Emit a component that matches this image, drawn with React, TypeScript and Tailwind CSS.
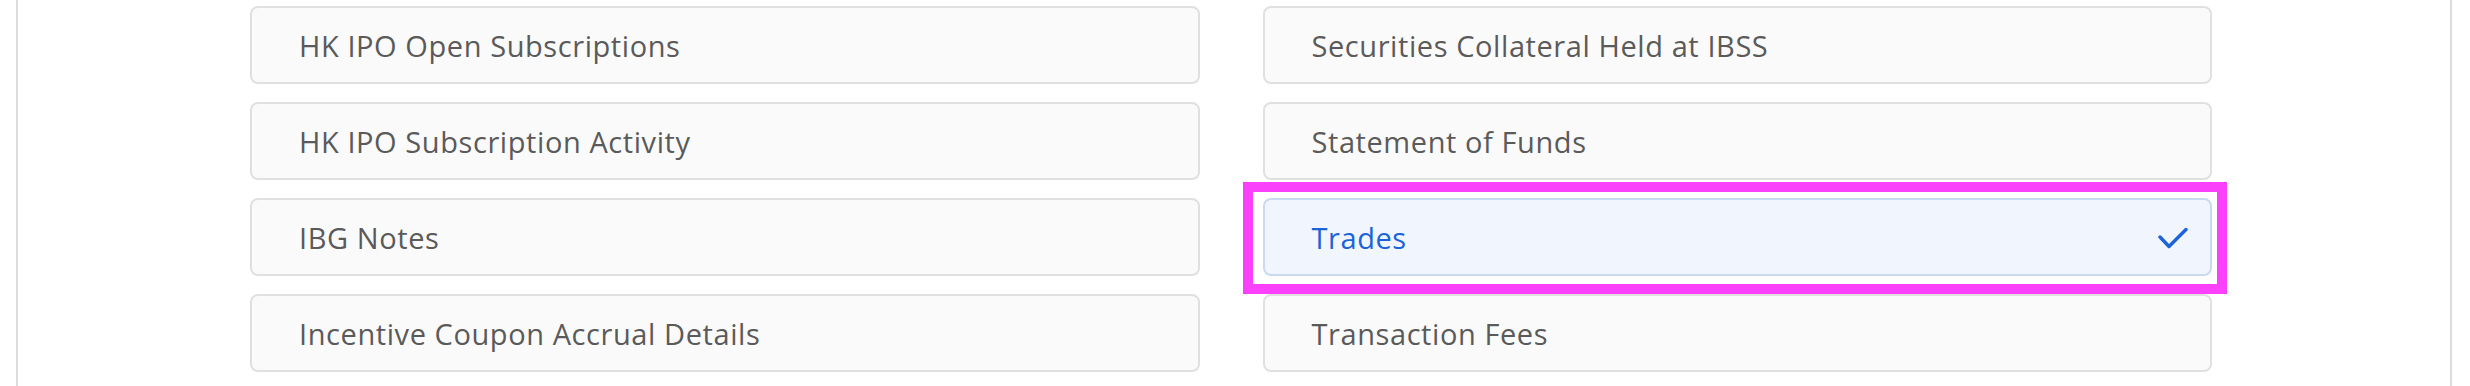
import React from "react";

const left = [
  "HK IPO Open Subscriptions",
  "HK IPO Subscription Activity",
  "IBG Notes",
  "Incentive Coupon Accrual Details",
];
const right = [
  "Securities Collateral Held at IBSS",
  "Statement of Funds",
  "Trades",
  "Transaction Fees",
];

function Card({ label, selected }: { label: string; selected?: boolean }) {
  if (selected) {
    return (
      <div className="relative">
        <div className="absolute -left-[20px] -top-[16px] -right-[15px] -bottom-[18px] border-[10px] border-[#fb40fb]" />
        <div className="relative h-[78px] rounded-[8px] border-2 border-[#c9d9f0] bg-[#f1f6fe] flex items-center justify-between pl-[47px] pr-[22px]">
          <span className="text-[29px] tracking-[0.02em] text-[#1c63d8] leading-none">{label}</span>
          <svg width="30" height="22" viewBox="0 0 30 22" className="mt-[2px]">
            <polyline
              points="2,10 11,19.5 28,2.5"
              fill="none"
              stroke="#1c63d8"
              strokeWidth="3.4"
              strokeLinecap="round"
              strokeLinejoin="round"
            />
          </svg>
        </div>
      </div>
    );
  }
  return (
    <div className="h-[78px] rounded-[8px] border-2 border-[#e0e0e0] bg-[#fafafa] flex items-center pl-[47px]">
      <span className="text-[29px] tracking-[0.02em] text-[#5a5a5a] leading-none">{label}</span>
    </div>
  );
}

export default function App() {
  return (
    <div
      className="w-[2470px] h-[386px] bg-white overflow-hidden"
      style={{ fontFamily: '"Open Sans", "Liberation Sans", sans-serif' }}
    >
      <div className="ml-[16px] w-[2436px] h-full border-x-2 border-[#dcdcdc] pl-[232px] pt-[6px]">
        <div className="w-[1962px] grid grid-cols-2 gap-x-[63px] gap-y-[18px]">
          {left.map((l, i) => (
            <React.Fragment key={l}>
              <Card label={l} />
              <Card label={right[i]} selected={right[i] === "Trades"} />
            </React.Fragment>
          ))}
        </div>
      </div>
    </div>
  );
}
